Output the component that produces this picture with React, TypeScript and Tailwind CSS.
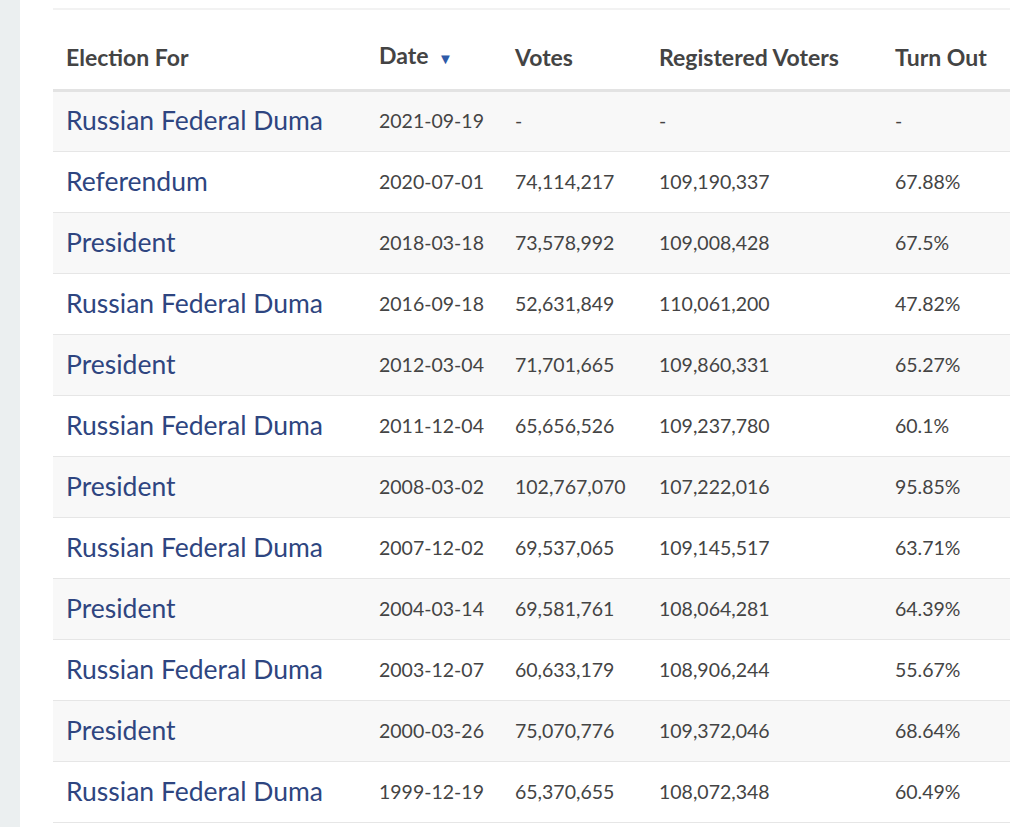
const rows = [
  ['Russian Federal Duma', '2021-09-19', '-', '-', '-'],
  ['Referendum', '2020-07-01', '74,114,217', '109,190,337', '67.88%'],
  ['President', '2018-03-18', '73,578,992', '109,008,428', '67.5%'],
  ['Russian Federal Duma', '2016-09-18', '52,631,849', '110,061,200', '47.82%'],
  ['President', '2012-03-04', '71,701,665', '109,860,331', '65.27%'],
  ['Russian Federal Duma', '2011-12-04', '65,656,526', '109,237,780', '60.1%'],
  ['President', '2008-03-02', '102,767,070', '107,222,016', '95.85%'],
  ['Russian Federal Duma', '2007-12-02', '69,537,065', '109,145,517', '63.71%'],
  ['President', '2004-03-14', '69,581,761', '108,064,281', '64.39%'],
  ['Russian Federal Duma', '2003-12-07', '60,633,179', '108,906,244', '55.67%'],
  ['President', '2000-03-26', '75,070,776', '109,372,046', '68.64%'],
  ['Russian Federal Duma', '1999-12-19', '65,370,655', '108,072,348', '60.49%'],
];

export default function App() {
  return (
    <div className="flex h-[827px] overflow-hidden bg-white" style={{ fontFamily: 'Lato, "Noto Sans", sans-serif' }}>
      <div className="w-[20px] shrink-0 bg-[#ebeff0]" />
      <div className="flex-1 pl-[33px] pr-[14px] pt-[8px]">
        <div className="h-[2px] bg-[#f2f2f2]" />
        <table className="w-full table-fixed border-collapse text-[#444]">
          <thead>
            <tr className="h-[80px] border-b-[3px] border-[#e3e3e3] text-[23px] font-bold">
              <th className="w-[313px] pl-[13px] pt-[15px] text-left font-bold">Election For</th>
              <th className="w-[136px] pl-[13px] pt-[12px] text-left font-bold">
                Date <span className="ml-1 text-[15px] text-[#2f5aa8]">▼</span>
              </th>
              <th className="w-[144px] pl-[13px] pt-[15px] text-left font-bold">Votes</th>
              <th className="w-[236px] pl-[13px] pt-[15px] text-left font-bold">Registered Voters</th>
              <th className="pl-[13px] pt-[15px] text-left font-bold">Turn Out</th>
            </tr>
          </thead>
          <tbody>
            {rows.map((r, i) => (
              <tr key={i} className={`h-[61px] border-b border-[#e6e6e6] ${i % 2 === 0 ? 'bg-[#f8f8f8]' : 'bg-white'}`}>
                <td className="whitespace-nowrap pl-[13px] text-[26.5px] text-[#2e4580]">{r[0]}</td>
                <td className="whitespace-nowrap pl-[13px] text-[19.5px]">{r[1]}</td>
                <td className="whitespace-nowrap pl-[13px] text-[19.5px]">{r[2]}</td>
                <td className="whitespace-nowrap pl-[13px] text-[19.5px]">{r[3]}</td>
                <td className="whitespace-nowrap pl-[13px] text-[19.5px]">{r[4]}</td>
              </tr>
            ))}
          </tbody>
        </table>
      </div>
    </div>
  );
}
